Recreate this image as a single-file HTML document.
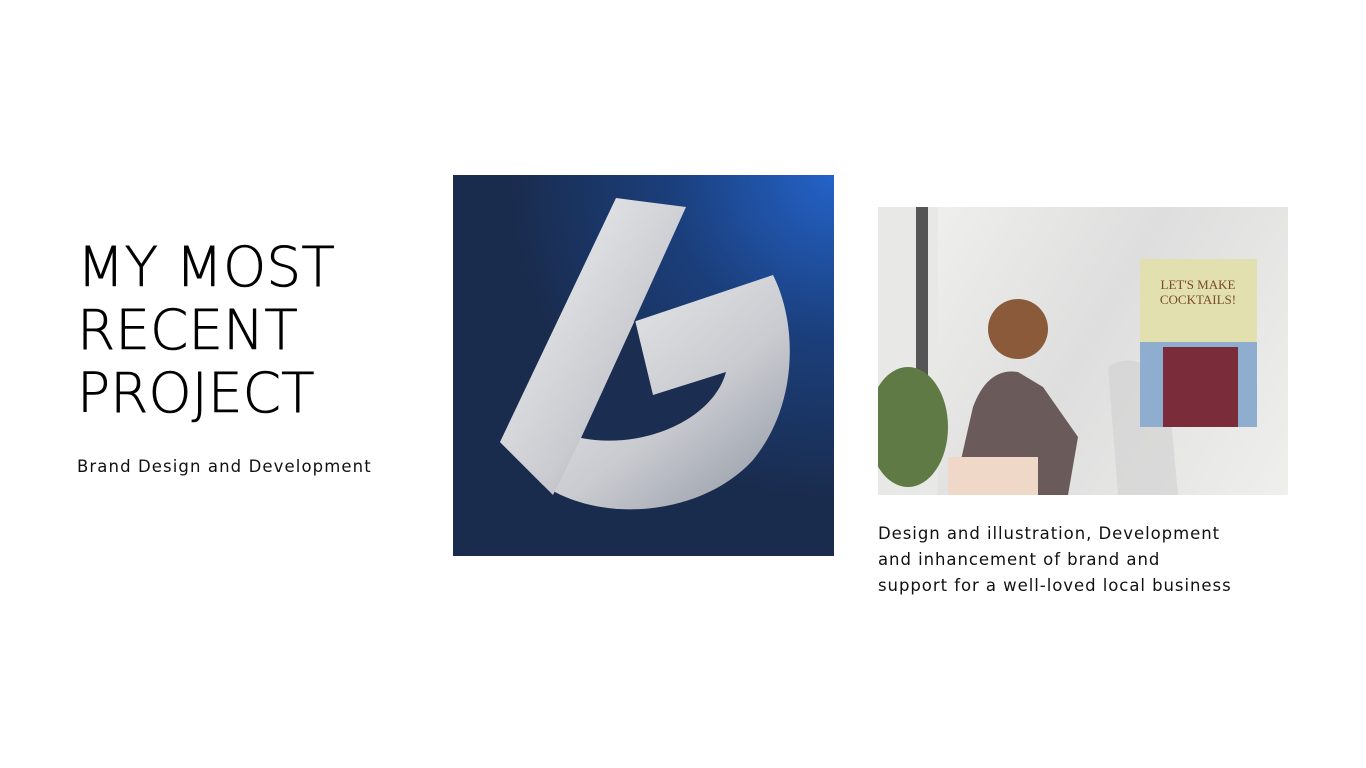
<!DOCTYPE html>
<html><head><meta charset="utf-8"><style>
body{margin:0;width:1366px;height:768px;background:#fff;position:relative;overflow:hidden;font-family:"DejaVu Sans","Liberation Sans",sans-serif;color:#111}
h1{position:absolute;left:77px;top:236px;margin:0;font-family:"DejaVu Sans",sans-serif;font-weight:200;font-size:55px;line-height:63px;white-space:nowrap;color:#000;-webkit-text-stroke:0.6px #000}
.sub{position:absolute;left:77px;top:457px;font-size:16.5px;letter-spacing:1.1px;color:#111}
.desc{position:absolute;left:878px;top:521px;font-size:16.5px;line-height:26px;letter-spacing:0.95px;white-space:nowrap;color:#111}
.logo{position:absolute;left:453px;top:175px;width:381px;height:381px;background:radial-gradient(circle at 100% 0%,#2463c9 0%,#1b3f7c 30%,#1a2c4e 60%)}
.photo{position:absolute;left:878px;top:207px;width:410px;height:288px;background:linear-gradient(120deg,#f3f3f1,#dedede 50%,#efefed)}
</style></head><body>
<h1>MY MOST<br>RECENT<br>PROJECT</h1>
<div class="sub">Brand Design and Development</div>
<div class="logo"><svg width="381" height="381" viewBox="0 0 381 381">
<defs><linearGradient id="g" x1="0" y1="0" x2="1" y2="1"><stop offset="0" stop-color="#f4f4f6"/><stop offset="0.6" stop-color="#c9cbd0"/><stop offset="1" stop-color="#8e95a2"/></linearGradient></defs>
<path d="M180 147 L320 100 C345 150 345 230 300 285 C250 340 150 350 90 310 L47 267 Z" fill="url(#g)"/>
<path d="M163 23 L233 32 L128 263 L100 320 L47 267 Z" fill="url(#g)"/>
<path d="M182 145 L200 220 L273 197 C260 245 190 275 128 263 Z" fill="#1b2d50"/>
</svg></div>
<div class="photo"><svg width="410" height="288">
<rect x="0" y="0" width="60" height="288" fill="#e8e8e6"/><rect x="38" y="0" width="12" height="170" fill="#555"/>
<ellipse cx="30" cy="220" rx="40" ry="60" fill="#5f7a45"/>
<path d="M95 200 Q110 160 140 165 L165 180 L200 230 L190 288 L75 288 Z" fill="#6a5a5a"/>
<rect x="70" y="250" width="90" height="38" fill="#f0d8c8"/>
<circle cx="140" cy="122" r="30" fill="#8a5a3a"/>
<path d="M230 160 Q260 140 290 180 L300 288 L240 288 Z" fill="#d0d0d0" opacity=".6"/>
<rect x="262" y="52" width="117" height="168" fill="#e3e0b0"/>
<rect x="262" y="135" width="117" height="85" fill="#8faecf"/>
<rect x="285" y="140" width="75" height="80" fill="#7a2c3a"/>
<text x="320" y="82" font-size="13" text-anchor="middle" fill="#7a4a2a" font-family="Liberation Serif">LET'S MAKE</text>
<text x="320" y="97" font-size="13" text-anchor="middle" fill="#7a4a2a" font-family="Liberation Serif">COCKTAILS!</text>
</svg></div>
<div class="desc">Design and illustration, Development<br>and inhancement of brand and<br>support for a well-loved local business</div>
</body></html>
